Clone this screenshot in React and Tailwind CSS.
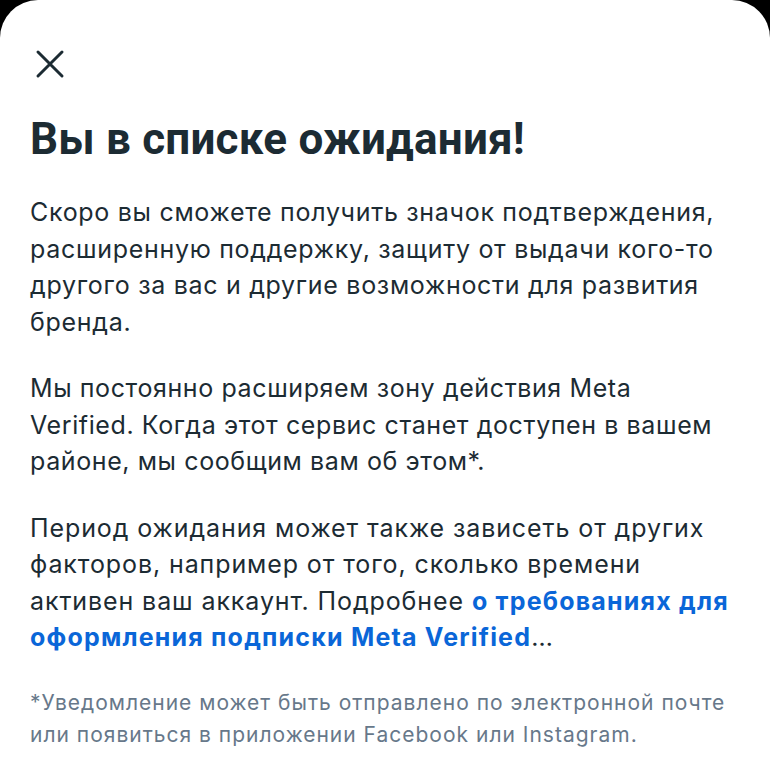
import React from 'react';

function CloseIcon() {
    return (
        <svg width="30" height="30" viewBox="0 0 30 30" fill="none">
            <path d="M3 3L27 27M27 3L3 27" stroke="#1c2b33" strokeWidth="3" strokeLinecap="round" />
        </svg>
    );
}

function App() {
    return (
        <div className="w-[770px] h-[770px] bg-black overflow-hidden" style={{ fontFamily: 'Inter, "Noto Sans", sans-serif' }}>
            <div className="h-full bg-white rounded-t-[38px] px-[30px] pt-[49px] text-[#1c2b33]">
                {/* Close */}
                <button className="flex items-center justify-center w-[30px] h-[30px] ml-[5px]">
                    <CloseIcon />
                </button>

                <h1 className="mt-[34px] text-[44px] leading-[52px] font-bold tracking-[0.2px] font-['Roboto']">Вы в списке ожидания!</h1>

                <div className="mt-[29px] text-[25px] leading-[36.5px]">
                    <p className="whitespace-nowrap tracking-[0.7px]">
                        <span className="block">Скоро вы сможете получить значок подтверждения,</span>
                        <span className="block">расширенную поддержку, защиту от выдачи кого-то</span>
                        <span className="block">другого за вас и другие возможности для развития</span>
                        <span className="block">бренда.</span>
                    </p>

                    <p className="mt-[30px] whitespace-nowrap tracking-[0.6px]">
                        <span className="block">Мы постоянно расширяем зону действия Meta</span>
                        <span className="block">Verified. Когда этот сервис станет доступен в вашем</span>
                        <span className="block">районе, мы сообщим вам об этом*.</span>
                    </p>

                    <p className="mt-[30px] whitespace-nowrap tracking-[0.9px]">
                        <span className="block">Период ожидания может также зависеть от других</span>
                        <span className="block">факторов, например от того, сколько времени</span>
                        <span className="block">
                            активен ваш аккаунт. Подробнее{' '}
                            <a href="#" className="font-bold text-[#0a66d8] tracking-[1.2px]">о требованиях для</a>
                        </span>
                        <span className="block">
                            <a href="#" className="font-bold text-[#0a66d8] tracking-[1.2px]">оформления подписки Meta Verified</a>…
                        </span>
                    </p>
                </div>

                <p className="mt-[31px] text-[21px] leading-[32px] tracking-[1px] text-[#67788a] whitespace-nowrap">
                    <span className="block">*Уведомление может быть отправлено по электронной почте</span>
                    <span className="block">или появиться в приложении Facebook или Instagram.</span>
                </p>
            </div>
        </div>
    );
}

export default App;
